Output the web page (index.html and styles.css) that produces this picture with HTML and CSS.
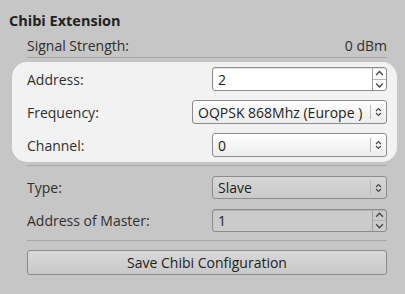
FILE: index.html
```html
<!DOCTYPE html>
<html lang="en">
<head>
    <meta charset="UTF-8">
    <title>Chibi Extension</title>
    <link rel="stylesheet" href="styles.css">
</head>
<body>
<div class="title">Chibi Extension</div>

<div class="row">
    <span class="label">Signal Strength:</span>
    <span class="value">0 dBm</span>
</div>
<div class="line first-line"></div>

<div class="panel">
    <div class="row">
        <span class="label">Address:</span>
        <div class="spin">
            <span class="text">2</span>
            <span class="arrows">
                <svg width="8" height="5" viewBox="0 0 8 5"><path d="M1 4 L4 1 L7 4" fill="none" stroke="#444" stroke-width="1.2"/></svg>
                <svg width="8" height="5" viewBox="0 0 8 5"><path d="M1 1 L4 4 L7 1" fill="none" stroke="#444" stroke-width="1.2"/></svg>
            </span>
        </div>
    </div>
    <div class="row gap">
        <span class="label">Frequency:</span>
        <div class="combo wide">
            <span class="text">OQPSK 868Mhz (Europe )</span>
            <span class="chev">
                <svg width="7" height="10" viewBox="0 0 7 10"><path d="M1 4 L3.5 1.5 L6 4 M1 6 L3.5 8.5 L6 6" fill="none" stroke="#444" stroke-width="1.1"/></svg>
            </span>
        </div>
    </div>
    <div class="row gap">
        <span class="label">Channel:</span>
        <div class="combo">
            <span class="text">0</span>
            <span class="chev">
                <svg width="7" height="10" viewBox="0 0 7 10"><path d="M1 4 L3.5 1.5 L6 4 M1 6 L3.5 8.5 L6 6" fill="none" stroke="#444" stroke-width="1.1"/></svg>
            </span>
        </div>
    </div>
</div>
<div class="line panel-line"></div>

<div class="row type-row">
    <span class="label">Type:</span>
    <div class="combo grey">
        <span class="text">Slave</span>
        <span class="chev">
            <svg width="7" height="10" viewBox="0 0 7 10"><path d="M1 4 L3.5 1.5 L6 4 M1 6 L3.5 8.5 L6 6" fill="none" stroke="#444" stroke-width="1.1"/></svg>
        </span>
    </div>
</div>
<div class="row master-row">
    <span class="label">Address of Master:</span>
    <div class="spin grey">
        <span class="text">1</span>
        <span class="arrows">
            <svg width="8" height="5" viewBox="0 0 8 5"><path d="M1 4 L4 1 L7 4" fill="none" stroke="#444" stroke-width="1.2"/></svg>
            <svg width="8" height="5" viewBox="0 0 8 5"><path d="M1 1 L4 4 L7 1" fill="none" stroke="#444" stroke-width="1.2"/></svg>
        </span>
    </div>
</div>
<div class="line master-line"></div>

<button class="save-btn">Save Chibi Configuration</button>
</body>
</html>
```

FILE: styles.css
```css
body {
    margin: 0;
    padding: 0;
    background: #c6c6c6;
    font-family: 'Open Sans', sans-serif;
    font-size: 14px;
    color: #2f2f2f;
}

.title {
    margin: 13px 0 0 9px;
    line-height: 16px;
    font-size: 14.5px;
    font-weight: bold;
    color: #222;
}

.row {
    display: flex;
    align-items: center;
    justify-content: space-between;
    margin: 8px 18px 0 27px;
    height: 16px;
}

.line {
    height: 1px;
    background: #a8a8a8;
    margin: 0 18px 0 27px;
}

.first-line {
    margin-top: 4px;
}

.panel {
    margin: 4px 8px 0 12px;
    padding: 5px 10px 5px 15px;
    background: #f2f2f2;
    border-radius: 15px;
}

.panel .row {
    margin: 0;
    height: 24px;
}

.panel .row.gap {
    margin-top: 9px;
}

.panel-line {
    margin-top: 3px;
}

.type-row, .master-row {
    margin-top: 10px;
    height: 23px;
}

.master-line {
    margin-top: 8px;
}

.spin, .combo {
    box-sizing: border-box;
    width: 175px;
    height: 24px;
    border: 1px solid #8c8c8c;
    border-radius: 3px;
    display: flex;
    align-items: stretch;
    color: #222;
}

.spin {
    background: #fff;
    box-shadow: inset 0 1px 1px rgba(0, 0, 0, 0.12);
}

.spin.grey {
    height: 23px;
    background: #cbcbcb;
}

.combo {
    background: linear-gradient(#ffffff, #ededed);
}

.combo.wide {
    width: 195px;
}

.combo.grey {
    height: 23px;
    background: linear-gradient(#d6d6d6, #c9c9c9);
}

.text {
    flex: 1;
    display: flex;
    align-items: center;
    padding-left: 5px;
    white-space: nowrap;
    overflow: hidden;
}

.arrows {
    width: 13px;
    border-left: 1px solid #a0a0a0;
    display: flex;
    flex-direction: column;
}

.arrows svg {
    flex: 1;
    width: 13px;
    padding: 0 2px;
    box-sizing: border-box;
}

.arrows svg + svg {
    border-top: 1px solid #b5b5b5;
}

.chev {
    width: 15px;
    display: flex;
    align-items: center;
    justify-content: center;
    border-left: 1px solid #b8b8b8;
    margin: 4px 0;
}

.save-btn {
    display: block;
    box-sizing: border-box;
    margin: 9px 18px 0 27px;
    width: 360px;
    height: 25px;
    border: 1px solid #8c8c8c;
    border-radius: 3px;
    background: linear-gradient(#d8d8d8, #c9c9c9);
    font-family: 'Open Sans', sans-serif;
    font-size: 14px;
    color: #222;
    padding: 0;
}
```
